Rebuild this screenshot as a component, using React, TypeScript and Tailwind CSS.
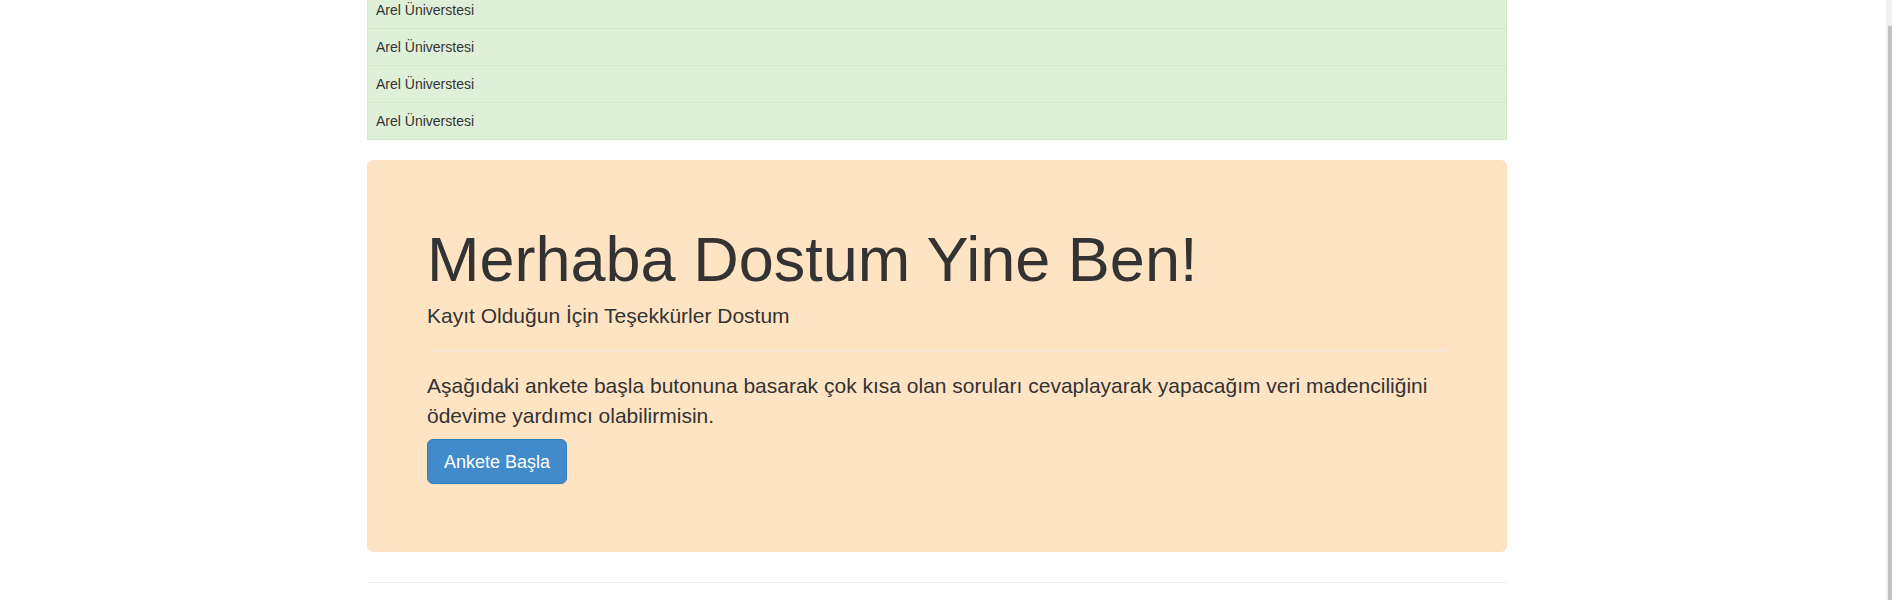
import React from 'react';

const App: React.FC = () => {
  const items = ['Arel Üniverstesi', 'Arel Üniverstesi', 'Arel Üniverstesi', 'Arel Üniverstesi'];

  return (
    <div className="min-h-screen bg-white text-[#333] font-['Liberation_Sans',Arial,sans-serif] overflow-hidden">
      <div className="w-[1140px] ml-[367px]">
        {/* List (scrolled) */}
        <ul className="-mt-[9px]">
          {items.map((item, index) => (
            <li
              key={index}
              className="bg-[#dff0d8] border border-[#d6e9c6] -mb-px last:mb-0 p-2 text-sm leading-5"
            >
              {item}
            </li>
          ))}
        </ul>

        {/* Jumbotron */}
        <div className="mt-[20px] bg-[#ffe4c4] rounded-[6px] px-[60px] pt-[65px] pb-[68px]">
          <h1 className="text-[63px] leading-[1.1] font-normal">Merhaba Dostum Yine Ben!</h1>
          <p className="mt-[7px] text-[21px] leading-[30px]">Kayıt Olduğun İçin Teşekkürler Dostum</p>
          <hr className="mt-[19px] border-0 border-t border-[#eee]" />
          <p className="mt-[20px] text-[21px] leading-[30px]">
            Aşağıdaki ankete başla butonuna basarak çok kısa olan soruları cevaplayarak yapacağım veri madenciliğini ödevime yardımcı olabilirmisin.
          </p>
          <button className="mt-[8px] h-[45px] px-4 bg-[#428bca] border border-[#357ebd] rounded-[6px] text-white text-[18px] leading-none">
            Ankete Başla
          </button>
        </div>

        <hr className="mt-[30px] border-0 border-t border-[#eee]" />
      </div>

      {/* Scrollbar */}
      <div className="fixed top-0 right-0 w-[6px] h-full bg-[#f1f1f1] flex">
        <div className="mt-[26px] ml-[2px] w-[4px] flex-1 bg-[#c1c1c1]" />
      </div>
    </div>
  );
};

export default App;
